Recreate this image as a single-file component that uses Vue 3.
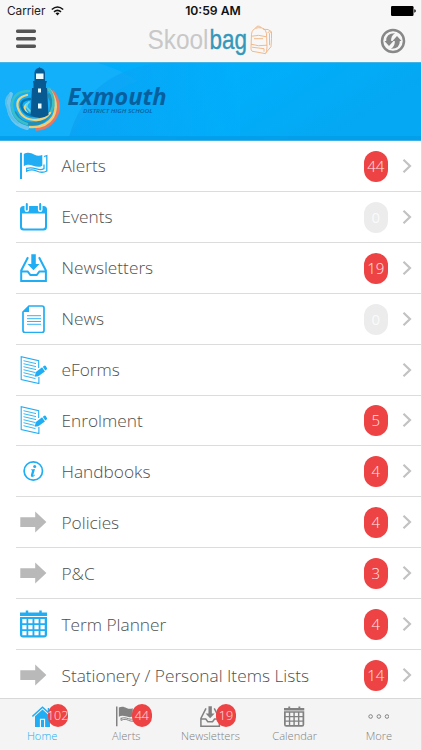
<script setup>
const rows = [
  { label: 'Alerts', icon: 'flag', count: 44 },
  { label: 'Events', icon: 'event', count: 0 },
  { label: 'Newsletters', icon: 'inbox', count: 19 },
  { label: 'News', icon: 'page', count: 0 },
  { label: 'eForms', icon: 'form', count: null },
  { label: 'Enrolment', icon: 'form', count: 5 },
  { label: 'Handbooks', icon: 'info', count: 4 },
  { label: 'Policies', icon: 'arrow', count: 4 },
  { label: 'P&C', icon: 'arrow', count: 3 },
  { label: 'Term Planner', icon: 'calendar', count: 4 },
  { label: 'Stationery / Personal Items Lists', icon: 'arrow', count: 14 },
]
const tabs = [
  { label: 'Home', icon: 'home', count: 102, active: true },
  { label: 'Alerts', icon: 'flag', count: 44 },
  { label: 'Newsletters', icon: 'inbox', count: 19 },
  { label: 'Calendar', icon: 'calendar' },
  { label: 'More', icon: 'more' },
]
</script>

<template>
  <div class="screen">
    <svg class="sprite" width="0" height="0">
      <symbol id="flag" viewBox="0 0 28 28">
        <path d="M0 .8h2V27H0z" fill="currentColor" />
        <path d="M3.800 2C8.500-.2 11 1.200 14 2.600S19.500 4.200 22.300 3v10.700c-3.300 2-6.300 1-9.300 0s-6-1.400-9.200.6z" fill="currentColor" />
        <path d="M24 4.500l2.800-.8v15.300c-4 2.200-7.600 1.200-10.300 0s-5.500-2-9.800.2v-3.500M6.700 16.500c4-1.500 6.800-.6 9.800.4s5.500.9 7.500-.3v-4" fill="none" stroke="currentColor" stroke-width="1.300" />
      </symbol>
      <symbol id="event" viewBox="0 0 28 28">
        <path fill-rule="evenodd" d="M3.500 3h20q3.500 0 3.500 3.500v17.500q0 3.500-3.500 3.500h-20Q0 27.500 0 24V6.500Q0 3 3.500 3zM2 10.500V23.500q0 2 2 2h19q2 0 2-2v-13z" fill="currentColor" />
        <path d="M6.800 2.800v4M20.200 2.800v4" stroke="#fff" stroke-width="4.600" stroke-linecap="round" />
        <path d="M6.800 1v5.500M20.200 1v5.500" stroke="currentColor" stroke-width="2" stroke-linecap="round" />
      </symbol>
      <symbol id="inbox" viewBox="0 0 28 28">
        <path d="M11.300.3h4.500v9.700h3.700l-6 6.300-6-6.300h3.800z" fill="currentColor" />
        <path d="M8 3.200L1.200 16.500V27h24.700V16.500L19 3.200M1.200 17.400h6.500l2.700 3.600h6.300l2.700-3.600h6.500" fill="none" stroke="currentColor" stroke-width="2" />
      </symbol>
      <symbol id="page" viewBox="0 0 28 28">
        <path d="M9 1h13q2 0 2 2v22.500q0 2-2 2H5q-2 0-2-2V7z" fill="none" stroke="currentColor" stroke-width="1.700" />
        <path d="M9 1v6H3z" fill="currentColor" />
        <path d="M7 10.700h14M7 13.700h14M7 16.500h14M7 19.300h14" stroke="currentColor" stroke-width=".9" />
      </symbol>
      <symbol id="form" viewBox="0 0 28 28">
        <path d="M18.700 12V4.800L1.200.8v22.700l17.700 4v-6.500" fill="none" stroke="currentColor" stroke-width="1.100" />
        <path d="M3.500 4.700l12.500 2.900M3.500 7.700l12.500 2.900M3.500 10.700l12.500 2.900M3.500 13.700l12 2.900M3.500 16.700l11 2.700M3.500 19.700l12 2.900" stroke="currentColor" stroke-width=".9" />
        <path d="M14.600 20.800l1.300-4.800 6.200-4.700 2.800 4.300-6.600 4.700zM22.800 10.800l1.500-1q1-.5 1.600.4l1 1.700q.5.900-.3 1.500l-1.300 1z" fill="currentColor" />
      </symbol>
      <symbol id="info" viewBox="0 0 28 28">
        <circle cx="13.300" cy="14" r="9.200" fill="none" stroke="currentColor" stroke-width="1.700" />
        <circle cx="14.700" cy="9.400" r="1.500" fill="currentColor" />
        <path d="M11 12.400l4-.5-1.700 6.200q0 .8 1.500-.6l.4.500q-2 2.300-3.500 1.900-1.300-.4-.7-2.300l1-3.700q.2-.9-1-1z" fill="currentColor" />
      </symbol>
      <symbol id="arrow" viewBox="0 0 28 28">
        <path d="M.3 9.300h14.900V3.500L26.400 14 15.200 24.600v-5.700H.3z" fill="currentColor" />
      </symbol>
      <symbol id="calendar" viewBox="0 0 28 28">
        <path fill-rule="evenodd" d="M0 2.500h27V6H0zM0 7h27v17.500q0 3-3 3H3q-3 0-3-3zM2.300 9v4.200h4.200V9zM8.300 9v4.200h4.200V9zM14.400 9v4.200h4.200V9zM20.500 9v4.200h4.200V9zM2.300 15v4.200h4.200V15zM8.300 15v4.200h4.200V15zM14.400 15v4.200h4.200V15zM20.500 15v4.200h4.200V15zM2.300 21v4.200h4.200V21zM8.300 21v4.200h4.200V21zM14.400 21v4.200h4.200V21zM20.500 21v4.200h4.200V21z" fill="currentColor" />
        <path d="M7 .5v3M20.500.5v3" stroke="currentColor" stroke-width="2.500" />
      </symbol>
      <symbol id="home" viewBox="0 0 28 28">
        <path d="M.5 14L14 1.700 27.500 14M22 2.500v6" fill="none" stroke="currentColor" stroke-width="2" />
        <path fill-rule="evenodd" d="M4 13.500L14 4.500l10 9V28H4zM10.500 17v11h7V17z" fill="currentColor" />
        <path d="M12 18.500h4V28h-4z" fill="currentColor" />
      </symbol>
      <symbol id="more" viewBox="0 0 28 28">
        <g fill="none" stroke="currentColor" stroke-width="1.300">
          <circle cx="3.500" cy="14" r="2.400" /><circle cx="14.500" cy="14" r="2.400" /><circle cx="25.300" cy="14" r="2.400" />
        </g>
      </symbol>
    </svg>

    <header class="top">
      <div class="status">
        <span class="carrier">Carrier
          <svg width="13" height="10" viewBox="0 0 13 10">
            <path d="M.8 3.500q5.700-5 11.400 0M3 5.800q3.500-3 7 0" fill="none" stroke="#111" stroke-width="1.600" />
            <path d="M4.500 7.300q2-1.500 4 0l-2 2.200z" fill="#111" />
          </svg>
        </span>
        <span class="time">10:59 AM</span>
        <span class="power"><svg width="25" height="10" viewBox="0 0 25 10"><rect width="22.500" height="10" rx="1.200" /><path d="M23.300 3.300q1.500.3 1.500 1.700t-1.500 1.700z" /></svg></span>
      </div>
      <div class="navbar">
        <svg class="menu" width="20" height="20" viewBox="0 0 20 20"><path d="M1.700 2.200h16.600M1.700 9.700h16.600M1.700 17.200h16.600" stroke="#555" stroke-width="3.500" stroke-linecap="round" /></svg>
        <svg class="logo" width="128" height="38" viewBox="0 0 128 38">
          <text x="-.5" y="24.500" textLength="61" lengthAdjust="spacingAndGlyphs" class="skool">Skool</text>
          <text x="61.500" y="24.500" textLength="37.500" lengthAdjust="spacingAndGlyphs" class="bag">bag</text>
          <g fill="none" stroke="#f0b27f" stroke-width=".9" transform="translate(0 -.8)">
            <path d="M103.500 11q.5-6 7-6.500 7-.5 8 6l.5 13q0 6-1.500 7l-13.500-2.500q-1-.5-1-3z" />
            <path d="M107.500 5q2-4 6-.5M115 6q6-.5 8.500 2.500v7l-.5 8-5 6M119.500 9.500q2-2 4 0M121.500 10v12M104 13q6-2 14 .5M106 15.500h9M103 21q7 2.500 16 1M104 24l12 1.500v3" />
          </g>
        </svg>
        <svg class="refresh" width="26" height="26" viewBox="0 0 26 26">
          <circle cx="13" cy="13" r="11" fill="none" stroke="#888" stroke-width="2.500" />
          <g fill="#888"><path d="M15 5.200Q6 5 6.200 13H4.500l4.500 5 4.500-5h-2.300q-.5-5 3.800-7.800z" /><path d="M11 20.800q9 .2 8.800-7.800h1.700L17 8l-4.500 5h2.300q.5 5-3.800 7.800z" /></g>
        </svg>
      </div>
    </header>

    <svg class="banner" width="421" height="79" viewBox="0 0 421 79">
      <defs>
        <linearGradient id="sky" x1="0" x2="1" y2=".3"><stop stop-color="#04acf9" /><stop offset=".48" stop-color="#00affc" /><stop offset="1" stop-color="#05a8f2" /></linearGradient>
        <linearGradient id="ring" x1="0" x2="1"><stop stop-color="#0d9ff2" /><stop offset="1" stop-color="#00affc" /></linearGradient>
      </defs>
      <path d="M0 0h421v79H0z" fill="url(#sky)" />
      <path d="M0 0h95q22 6 43 19Q91 37 69 75H0z" fill="#1eb0fa" opacity=".6" />
      <path d="M69 75Q88 5 170 0h70v75z" fill="url(#ring)" opacity=".7" />
      <path d="M0 74h421v5H0z" fill="#039ce8" opacity=".75" />
      <path d="M0 .5h421M0 78.500h421" stroke="#5ab9e2" opacity=".7" />
      <g fill="none" stroke-linecap="round">
        <path d="M11 32C5 46 10 62 27 66" stroke="#70c5ed" stroke-width="4" />
        <path d="M7 43q2 13 11 18M9 33q-5 5-2 12" stroke="#57bfe8" stroke-width="2" />
        <path d="M53 30q10 15 1 27-6 9-17 10" stroke="#e87762" stroke-width="3.500" />
        <path d="M49 27q11 14 4 28-7 11-23 10" stroke="#edce76" stroke-width="2.500" />
        <path d="M49 33q6 10 0 20-6 9-17 9Q20 62 15 51" stroke="#238fb4" stroke-width="3.500" />
        <path d="M29 29Q14 29 12 42q0 15 15 20M49 27q8 11 2 23" stroke="#3bbfc6" stroke-width="2.500" />
        <path d="M27 33Q15 36 18 46q4 12 18 12 9 0 14-7M27 42q-5 4 0 9" stroke="#eed27c" stroke-width="2.300" />
        <path d="M30 37q-11 1-8 9 3 8 14 8" stroke="#087ab1" stroke-width="2.500" />
        <path d="M29 40q-5 4 0 8 5 5 17 3" stroke="#73d6dc" stroke-width="1.800" />
      </g>
      <path d="M33 19h14l-1 3v4h1l1.500 27q-9 6-18 0L32 26h1.500v-4z" fill="#075a91" />
      <path d="M34.500 10.500q.5-4 4-4.500l1-1 1 1q4 .5 4.500 4.500v9.500H34.500z" fill="#075a91" />
      <path d="M36 11.500h7.500v5.500H36zM38 26.500h3v4h-3zM38 41.500h3.500v5H38z" fill="#e9fbff" />
      <text x="67.500" y="43" textLength="99" lengthAdjust="spacingAndGlyphs" class="school">Exmouth</text>
      <text x="83" y="51" textLength="69.500" lengthAdjust="spacingAndGlyphs" class="district">DISTRICT HIGH SCHOOL</text>
    </svg>

    <main class="list">
      <div v-for="row in rows" :key="row.label" class="row">
        <svg class="icon" :class="{ muted: row.icon === 'arrow' }" width="28" height="28"><use :href="'#' + row.icon" /></svg>
        <span class="label">{{ row.label }}</span>
        <span v-if="row.count !== null" class="badge" :class="{ empty: row.count === 0 }">{{ row.count }}</span>
        <svg class="chevron" width="10" height="16" viewBox="0 0 10 16"><path d="M1.500 1.700L8 8l-6.500 6.300" fill="none" stroke="#c2c2c2" stroke-width="2.200" /></svg>
      </div>
    </main>

    <nav class="tabs">
      <div v-for="tab in tabs" :key="tab.label" class="tab" :class="{ active: tab.active }">
        <span class="tab-icon">
          <svg width="21" height="21"><use :href="'#' + tab.icon" /></svg>
          <span v-if="tab.count" class="tab-badge">{{ tab.count }}</span>
        </span>
        <span class="tab-label">{{ tab.label }}</span>
      </div>
    </nav>
  </div>
</template>

<style>
body { margin: 0; background: #fff; }
</style>

<style scoped>
.screen { width: 422px; height: 750px; box-sizing: border-box; overflow: hidden; display: flex; flex-direction: column; background: #fff; border-right: 1px solid #ddd; font-family: "Open Sans", sans-serif; font-weight: 300; }
.sprite { display: none; }
.top { flex: none; height: 62px; background: #f7f7f7; }
.status { height: 22px; display: grid; grid-template-columns: 1fr 1fr 1fr; align-items: center; padding: 0 5px 0 7px; font: 400 11.8px/22px Inter, sans-serif; color: #222; box-sizing: border-box; }
.carrier { display: flex; align-items: center; gap: 6px; letter-spacing: -.05px; }
.time { font-weight: 600; text-align: center; color: #111; white-space: nowrap; padding-left: 3px; font-size: 12.2px; }
.power { display: flex; justify-content: flex-end; }
.navbar { height: 40px; display: flex; align-items: center; padding: 0 15px 0 16px; }
.menu { margin-bottom: 7px; }
.logo { margin: 1px 0 0 112px; }
.refresh { margin: 0 0 3px auto; }
.skool, .bag { font-family: "Liberation Sans", sans-serif; font-size: 28.5px; font-weight: 400; fill: #c8c8c8; }
.bag { fill: #3598ba; stroke: #3598ba; stroke-width: .4px; }
.banner { flex: none; display: block; }
.school { font: italic 700 22.500px "Open Sans", sans-serif; fill: #075f9d; }
.district { font: italic 600 5.400px "Open Sans", sans-serif; fill: #075f9d; }
.list { height: 557px; overflow: hidden; flex: none; }
.row { height: 50.920px; box-sizing: border-box; margin-left: 16px; padding: 0 9px 0 4px; display: flex; align-items: center; border-bottom: 1px solid #dcdcdc; }
.icon { flex: none; color: #20adf4; }
.icon.muted { color: #b9b9b9; }
.label { flex: 1; margin-left: 13.500px; font-size: 17.270px; color: #505050; white-space: nowrap; }
.badge { width: 24.500px; height: 31px; border-radius: 12px; background: #ed4344; color: #ffe5e5; font-size: 15px; line-height: 31px; text-align: center; margin: 1px 14px 0 0; }
.badge.empty { background: #ececec; color: #fafafa; font-weight: 400; }
.tabs { flex: none; height: 52px; box-sizing: border-box; border-top: 1px solid #d8d8d8; background: #f4f4f4; display: grid; grid-template-columns: repeat(5, 1fr); }
.tab { display: flex; flex-direction: column; align-items: center; color: #818181; padding-top: 7px; }
.tab-icon { position: relative; height: 21px; }
.tab-icon svg { display: block; }
.tab-label { font-size: 11.100px; line-height: 16px; margin-top: 1px; }
.active { color: #20adf4; }
.tab-badge { position: absolute; left: 16px; top: -2px; width: 20px; height: 23px; border-radius: 10px; background: #ed4344; color: #ffe5e5; font-size: 12.500px; line-height: 23px; text-align: center; display: flex; justify-content: center; overflow: hidden; }
</style>
